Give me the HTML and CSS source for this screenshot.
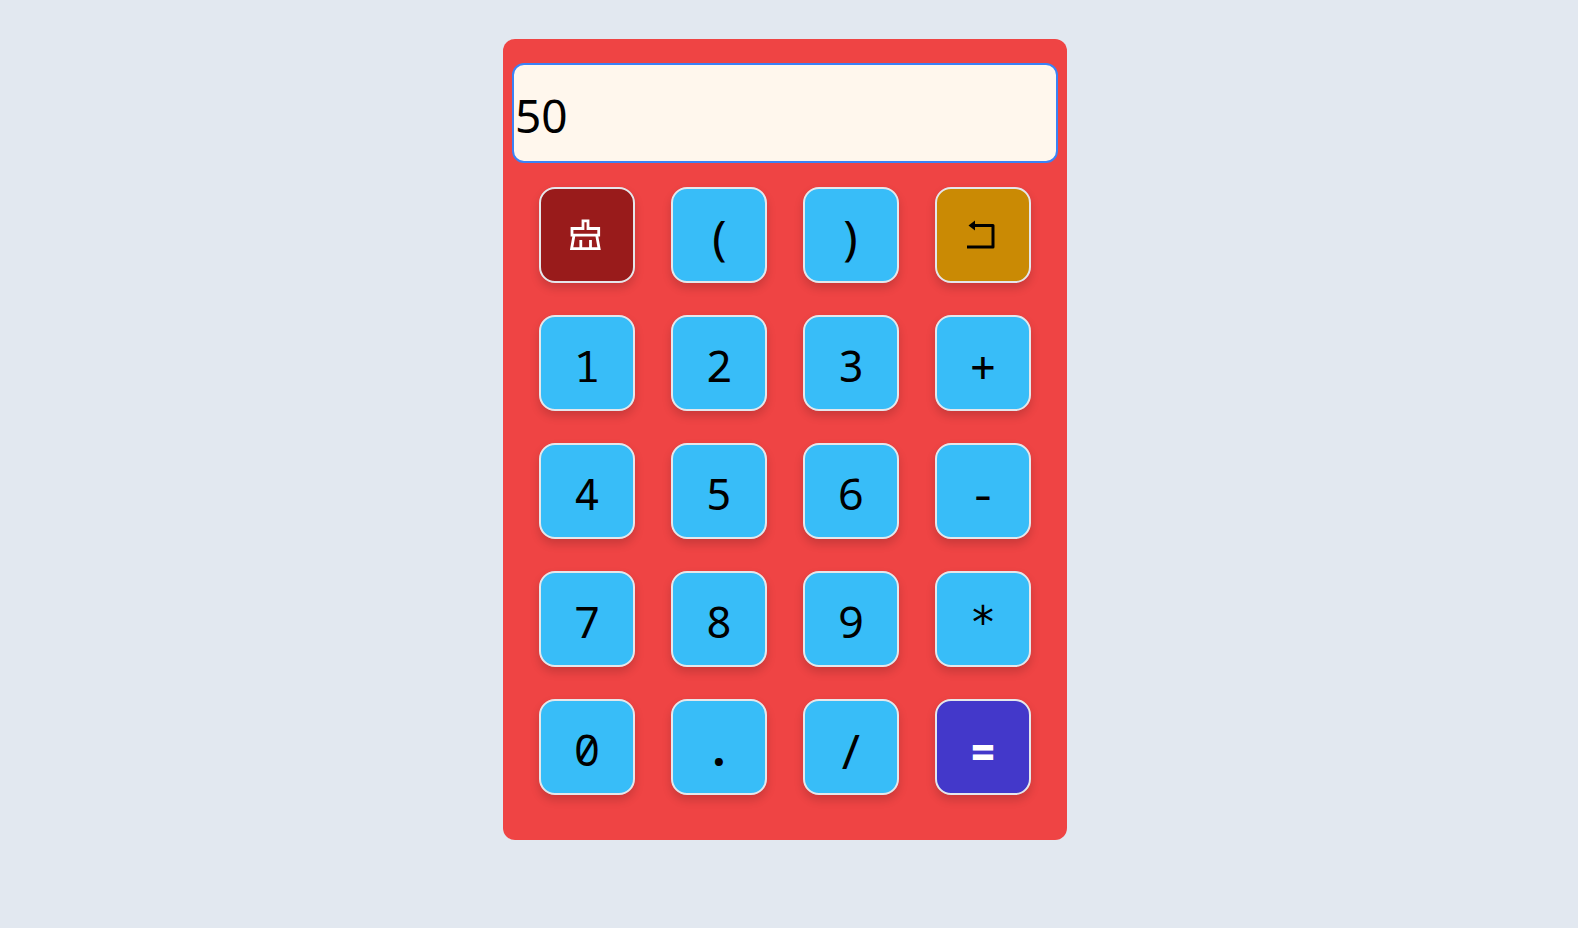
FILE: index.html
```html
<!DOCTYPE html>
<html lang="en">
<head>
<meta charset="utf-8">
<meta name="viewport" content="width=device-width, initial-scale=1">
<title>Calculator</title>
<link rel="stylesheet" href="styles.css">
</head>
<body>
<main class="calculator">
  <input class="display" type="text" value="50" aria-label="Result">
  <div class="keys">
    <button class="key key-clear" type="button" aria-label="Clear">
      <svg class="icon" viewBox="0 0 32 32" fill="none" stroke="currentColor" stroke-width="2.8" aria-hidden="true">
        <path d="M14 9.500V1.900h5v7.600H29.700v6.700H3V9.500zM5 16.200L2.600 29.700h27.500l-2.400-13.500M11.800 29.500v-8.500M21.500 29.500v-8.500"/>
      </svg>
    </button>
    <button class="key key-tall" type="button">(</button>
    <button class="key key-tall" type="button">)</button>
    <button class="key key-back" type="button" aria-label="Undo">
      <svg class="icon" viewBox="0 0 32 32" fill="none" stroke="currentColor" stroke-width="3" stroke-linejoin="round" aria-hidden="true">
        <path d="M8 6.500h20v21.500H2"/><path d="M3.500 6.500L10 1.500v10z" fill="currentColor" stroke="none"/>
      </svg>
    </button>
    <button class="key" type="button">1</button>
    <button class="key" type="button">2</button>
    <button class="key" type="button">3</button>
    <button class="key key-tall key-operator" type="button">+</button>
    <button class="key" type="button">4</button>
    <button class="key" type="button">5</button>
    <button class="key" type="button">6</button>
    <button class="key" type="button">-</button>
    <button class="key" type="button">7</button>
    <button class="key" type="button">8</button>
    <button class="key" type="button">9</button>
    <button class="key key-operator key-times" type="button">*</button>
    <button class="key" type="button">0</button>
    <button class="key key-point" type="button">.</button>
    <button class="key key-tall key-operator" type="button">/</button>
    <button class="key key-operator key-equals" type="button">=</button>
  </div>
</main>
</body>
</html>
```
FILE: styles.css
```css
* { box-sizing: border-box; }
body {
  margin: 0;
  min-height: 100vh;
  padding: 39px 8px 39px 0;
  background: #e2e8f0;
  font-family: "Noto Sans", sans-serif;
}
.calculator {
  max-width: 564px;
  margin: 0 auto;
  padding: 24px 9px 45px;
  border-radius: 12px;
  background: #ef4444;
}
.display {
  display: block;
  width: 100%;
  height: 100px;
  margin-bottom: 24px;
  padding: 4px 0 0 1px;
  border: 2px solid #3b82f6;
  border-radius: 12px;
  background: #fff7ed;
  color: #000;
  font: inherit;
  font-size: 46px;
  outline: none;
}
.keys {
  display: grid;
  grid-template-columns: repeat(4, 96px);
  justify-content: center;
  gap: 32px 36px;
}
.key {
  display: flex;
  align-items: center;
  justify-content: center;
  height: 96px;
  padding: 4px 0 0;
  border: 2px solid #e5e7eb;
  border-radius: 16px;
  background: #38bdf8;
  box-shadow: 0 5px 10px rgb(0 0 0 / 16%);
  color: #000;
  font-family: "Noto Sans Mono", "Noto Sans", monospace;
  font-size: 44px;
  font-variant-numeric: slashed-zero;
  line-height: 48px;
}
.key-clear { background: #991b1b; color: #fff; }
.key-back { background: #ca8a04; }
.key-clear, .key-back { padding: 0 4px 0 0; }
.key-tall { font-size: 48px; }
.key-operator { padding-top: 8px; }
.key-times { font-family: "DejaVu Sans Mono", monospace; }
.key-point { font-weight: 700; }
.key-equals { background: #4338ca; color: #fff; font-weight: 700; }
.icon { width: 32px; height: 32px; }
```
